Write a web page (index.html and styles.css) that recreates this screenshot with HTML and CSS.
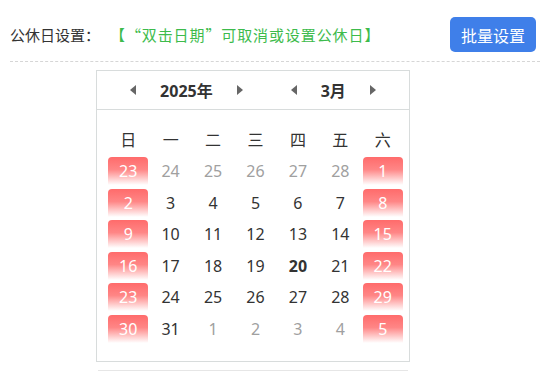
FILE: index.html
```html
<!DOCTYPE html>
<html lang="zh-CN">
<head>
    <meta charset="UTF-8">
    <meta name="viewport" content="width=device-width, initial-scale=1.0">
    <title>公休日设置</title>
    <link rel="stylesheet" href="styles.css">
</head>
<body>

    <div class="page">
        <div class="toolbar">
            <span class="label">公休日设置：</span>
            <span class="tip">【“双击日期”可取消或设置公休日】</span>
            <button class="batch-btn" type="button">批量设置</button>
        </div>

        <div class="calendar">
            <div class="cal-head">
                <div class="cal-nav">
                    <span class="arrow prev"></span>
                    <span class="cal-title">2025年</span>
                    <span class="arrow next"></span>
                </div>
                <div class="cal-nav">
                    <span class="arrow prev"></span>
                    <span class="cal-title">3月</span>
                    <span class="arrow next"></span>
                </div>
            </div>

            <div class="cal-body">
                <div class="week">
                    <span>日</span><span>一</span><span>二</span><span>三</span><span>四</span><span>五</span><span>六</span>
                </div>
                <div class="days">
                    <span class="day off">23</span>
                    <span class="day other">24</span>
                    <span class="day other">25</span>
                    <span class="day other">26</span>
                    <span class="day other">27</span>
                    <span class="day other">28</span>
                    <span class="day off">1</span>

                    <span class="day off">2</span>
                    <span class="day">3</span>
                    <span class="day">4</span>
                    <span class="day">5</span>
                    <span class="day">6</span>
                    <span class="day">7</span>
                    <span class="day off">8</span>

                    <span class="day off">9</span>
                    <span class="day">10</span>
                    <span class="day">11</span>
                    <span class="day">12</span>
                    <span class="day">13</span>
                    <span class="day">14</span>
                    <span class="day off">15</span>

                    <span class="day off">16</span>
                    <span class="day">17</span>
                    <span class="day">18</span>
                    <span class="day">19</span>
                    <span class="day today">20</span>
                    <span class="day">21</span>
                    <span class="day off">22</span>

                    <span class="day off">23</span>
                    <span class="day">24</span>
                    <span class="day">25</span>
                    <span class="day">26</span>
                    <span class="day">27</span>
                    <span class="day">28</span>
                    <span class="day off">29</span>

                    <span class="day off">30</span>
                    <span class="day">31</span>
                    <span class="day other">1</span>
                    <span class="day other">2</span>
                    <span class="day other">3</span>
                    <span class="day other">4</span>
                    <span class="day off">5</span>
                </div>
            </div>
        </div>

        <div class="cal-foot"></div>
    </div>

</body>
</html>
```

FILE: styles.css
```css
body {
    font-family: "Noto Sans", "Noto Sans CJK SC", sans-serif;
    margin: 0;
    padding: 0;
    background-color: #FFFFFF;
    color: #333333;
}

.page {
    padding: 17px 4px 0 10px;
}

.toolbar {
    display: flex;
    align-items: center;
    padding-bottom: 9px;
    border-bottom: 1px dashed #d6d6d6;
    margin-right: -4px;
}

.label {
    font-family: "Noto Sans CJK SC", sans-serif;
    font-size: 15px;
    color: #333333;
}

.tip {
    font-family: "Noto Sans CJK SC", sans-serif;
    font-size: 15px;
    color: #3dbb4c; /* green hint */
    margin-left: 10px;
    letter-spacing: 0.9px;
    text-spacing-trim: space-all;
}

.batch-btn {
    margin-left: auto;
    margin-right: 4px;
    width: 86px;
    height: 35px;
    background-color: #3f7fe9; /* blue */
    color: #FFFFFF;
    border: none;
    border-radius: 5px;
    font-family: "Noto Sans CJK SC", sans-serif;
    font-size: 16px;
    cursor: pointer;
}

.calendar {
    width: 312px;
    margin: 8px 0 0 86px;
    border: 1px solid #d8dcdc;
}

.cal-head {
    display: flex;
    justify-content: center;
    align-items: center;
    gap: 48px;
    height: 38px;
    border-bottom: 1px solid #d8dcdc;
}

.cal-nav {
    display: flex;
    align-items: center;
    gap: 24px;
}

.cal-title {
    font-size: 16px;
    font-weight: bold;
    color: #333333;
}

.arrow {
    display: inline-block;
    width: 0;
    height: 0;
    border-top: 5px solid transparent;
    border-bottom: 5px solid transparent;
    cursor: pointer;
}

.arrow.prev {
    border-right: 6px solid #666666;
}

.arrow.next {
    border-left: 6px solid #666666;
}

.cal-body {
    padding: 13px 5px 16px 10px;
}

.week,
.days {
    display: grid;
    grid-template-columns: repeat(7, 1fr);
    width: 297px;
}

.week span {
    height: 32px;
    line-height: 32px;
    text-align: center;
    font-family: "Noto Sans CJK SC", sans-serif;
    font-size: 16px;
    color: #333333;
}

.days {
    grid-auto-rows: 31.6px;
}

.day {
    width: 40px;
    height: 28px;
    margin: 2px auto 0;
    line-height: 28px;
    text-align: center;
    font-size: 16px;
    color: #333333;
}

.day.other {
    color: #a0a0a0;
}

.day.today {
    font-weight: bold;
}

/* public holiday */
.day.off {
    color: #FFFFFF;
    border-radius: 4px 4px 0 0;
    background: linear-gradient(to bottom, #ff6b6b 0%, #ff8686 45%, #ffffff 100%);
}

.cal-foot {
    width: 310px;
    margin: 8px 0 0 88px;
    border-top: 1px solid #e6e6e6;
}
```
